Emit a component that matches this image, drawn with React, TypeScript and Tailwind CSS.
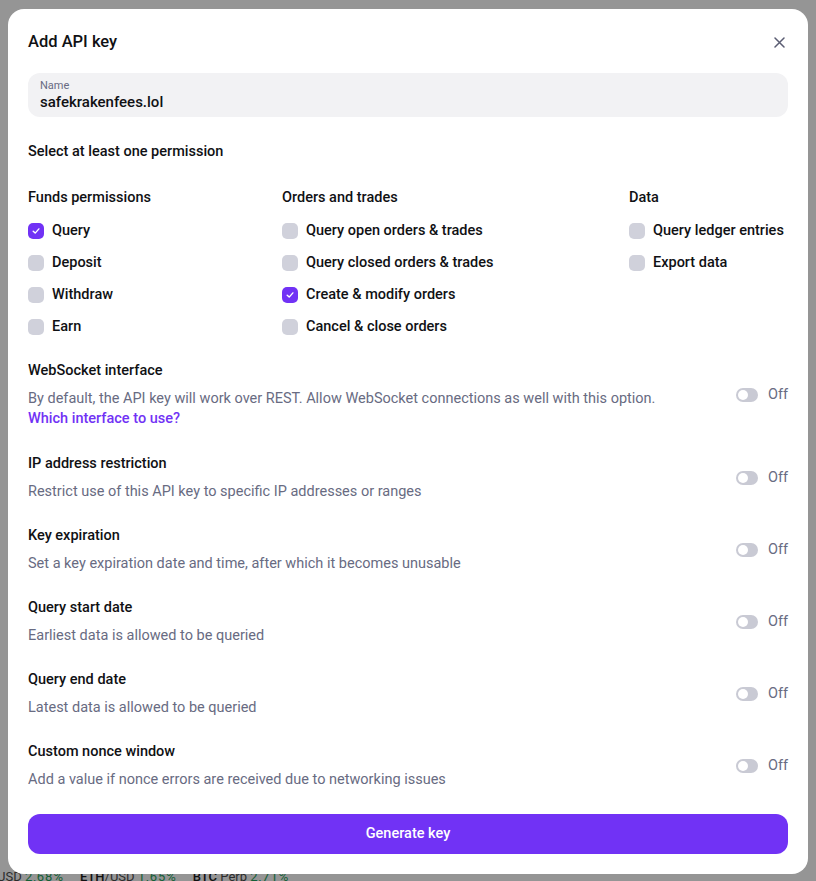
import React, { useState } from 'react';

const font = { fontFamily: 'Roboto, "Liberation Sans", sans-serif' };

type Perm = { label: string; checked?: boolean };

const columns: { title: string; items: Perm[] }[] = [
    {
        title: 'Funds permissions',
        items: [{ label: 'Query', checked: true }, { label: 'Deposit' }, { label: 'Withdraw' }, { label: 'Earn' }],
    },
    {
        title: 'Orders and trades',
        items: [
            { label: 'Query open orders & trades' },
            { label: 'Query closed orders & trades' },
            { label: 'Create & modify orders', checked: true },
            { label: 'Cancel & close orders' },
        ],
    },
    {
        title: 'Data',
        items: [{ label: 'Query ledger entries' }, { label: 'Export data' }],
    },
];

const options = [
    { title: 'IP address restriction', text: 'Restrict use of this API key to specific IP addresses or ranges' },
    { title: 'Key expiration', text: 'Set a key expiration date and time, after which it becomes unusable' },
    { title: 'Query start date', text: 'Earliest data is allowed to be queried' },
    { title: 'Query end date', text: 'Latest data is allowed to be queried' },
    { title: 'Custom nonce window', text: 'Add a value if nonce errors are received due to networking issues' },
];

function Checkbox({ label, checked }: Perm) {
    const [on, setOn] = useState(!!checked);
    return (
        <label className="flex h-5 cursor-pointer items-center gap-2" onClick={() => setOn(!on)}>
            <span
                className={
                    on
                        ? 'flex h-4 w-4 items-center justify-center rounded-[5px] bg-[#7132f5]'
                        : 'flex h-4 w-4 items-center justify-center rounded-[5px] bg-[#d0d1db]'
                }
            >
                {on && (
                    <svg width="10" height="10" viewBox="0 0 10 10" fill="none">
                        <path d="M2.2 5.2 4.2 7.1 7.9 2.9" stroke="white" strokeWidth="1.4" strokeLinecap="round" strokeLinejoin="round" />
                    </svg>
                )}
            </span>
            <span className="text-[14.5px] font-medium text-[#101114]">{label}</span>
        </label>
    );
}

function Toggle() {
    const [on, setOn] = useState(false);
    return (
        <button type="button" className="flex items-center gap-[10px]" onClick={() => setOn(!on)}>
            <span
                className={
                    on
                        ? 'flex h-[14px] w-[22px] items-center justify-end rounded-full bg-[#7132f5] px-[2px]'
                        : 'flex h-[14px] w-[22px] items-center rounded-full bg-[#c9cad4] px-[2px]'
                }
            >
                <span className="h-[10px] w-[10px] rounded-full bg-white" />
            </span>
            <span className="text-[14.5px] text-[#686b82]">{on ? 'On' : 'Off'}</span>
        </button>
    );
}

function OptionRow({ title, children, extra }: { title: string; children: React.ReactNode; extra?: string }) {
    return (
        <div className={'flex items-center justify-between ' + (extra ?? '')}>
            <div>
                <p className="text-[14.5px] font-medium leading-5 text-[#101114]">{title}</p>
                <div className="mt-2 text-[14.5px] leading-5 text-[#686b82]">{children}</div>
            </div>
            <Toggle />
        </div>
    );
}

export default function App() {
    return (
        <div className="relative flex h-[881px] flex-col justify-end overflow-hidden bg-[#959595]" style={font}>
            {/* ticker behind the overlay */}
            <div className="-mb-[4px] ml-[-3px] flex h-4 items-center gap-[16px] text-[13px] leading-4 text-[#2c2c2c]">
                <span>
                    USD <span className="tracking-[1px] text-[#145f36]">2,68%</span>
                </span>
                <span>
                    <span className="font-medium text-[#111]">ETH</span>/USD <span className="tracking-[1px] text-[#145f36]">1,65%</span>
                </span>
                <span>
                    <span className="font-medium text-[#111]">BTC</span> Perp <span className="tracking-[1px] text-[#145f36]">2,71%</span>
                </span>
            </div>

            <div className="absolute left-2 top-[9px] w-[800px] rounded-2xl bg-white px-5 pb-5 pt-5">
                <div className="flex h-[26px] items-center justify-between">
                    <h2 className="text-[16.5px] font-medium text-[#101114]">Add API key</h2>
                    <button type="button" aria-label="Close" className="mr-[3px] text-[#5b5d73]">
                        <svg width="11" height="11" viewBox="0 0 11 11" fill="none">
                            <path d="M1 1l9 9M10 1l-9 9" stroke="currentColor" strokeWidth="1.5" strokeLinecap="round" />
                        </svg>
                    </button>
                </div>

                <div className="mt-[18px] flex h-11 flex-col justify-center rounded-xl bg-[#f2f2f4] px-3">
                    <span className="text-[11px] leading-[14px] text-[#686b82]">Name</span>
                    <span className="text-[15px] font-medium leading-[19px] text-[#101114]">safekrakenfees.lol</span>
                </div>

                <p className="mt-[25px] text-[14.5px] font-medium leading-5 text-[#101114]">Select at least one permission</p>

                <div className="mt-[26px] grid grid-cols-[254px_347px_1fr]">
                    {columns.map((col) => (
                        <div key={col.title}>
                            <p className="text-[14.5px] font-medium leading-5 text-[#101114]">{col.title}</p>
                            <div className="mt-[13px] flex flex-col gap-3">
                                {col.items.map((it) => (
                                    <Checkbox key={it.label} {...it} />
                                ))}
                            </div>
                        </div>
                    ))}
                </div>

                <div className="mt-6 flex flex-col gap-6">
                    <OptionRow title="WebSocket interface" extra="mb-px">
                        <p>By default, the API key will work over REST. Allow WebSocket connections as well with this option.</p>
                        <a className="font-medium text-[#7132f5]">Which interface to use?</a>
                    </OptionRow>
                    {options.map((o) => (
                        <OptionRow key={o.title} title={o.title}>
                            <p>{o.text}</p>
                        </OptionRow>
                    ))}
                </div>

                <button
                    type="button"
                    className="mt-6 flex h-10 w-full items-center justify-center rounded-xl bg-[#7132f5] text-[14.5px] font-medium text-white"
                >
                    Generate key
                </button>
            </div>
        </div>
    );
}
